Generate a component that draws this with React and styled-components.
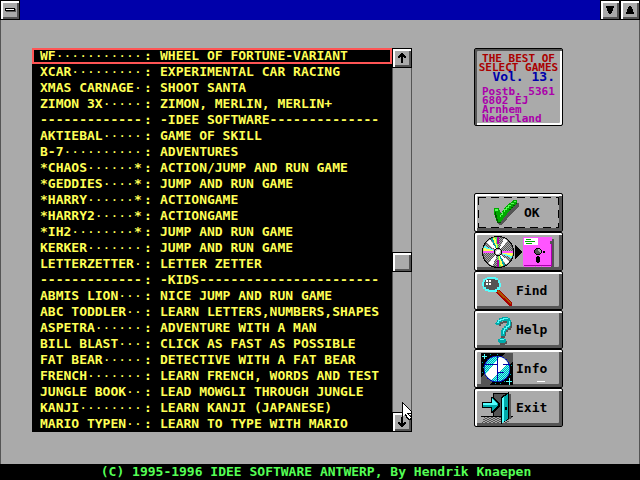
import React from "react";
import styled, { createGlobalStyle, css } from "styled-components";

const c = {
  gray: "#aaaaaa",
  dark: "#555555",
  blue: "#0000aa",
  yellow: "#ffff55",
  red: "#ff5555",
  green: "#55ff55",
};

const Global = createGlobalStyle`
  * { box-sizing: border-box; }
  body { margin: 0; background: ${c.gray}; font: bold 13px/16px "DejaVu Sans Mono", monospace; }
  button { font: inherit; color: #000; cursor: default; }
`;

const Page = styled.div`
  min-height: 100vh;
  display: flex;
  flex-direction: column;
`;

const TitleBar = styled.header`
  display: flex;
  height: 20px;
  background: ${c.blue};
`;

const Spacer = styled.div`
  flex: 1;
`;

const bevel = css`
  background: ${c.gray};
  border: 1px solid #000;
  box-shadow: inset 2px 2px 0 #fff, inset -2px -2px 0 ${c.dark};
`;

const SmallButton = styled.button`
  ${bevel}
  display: grid;
  place-items: center;
  flex: none;
  width: 20px;
  height: 20px;
  padding: 0;
`;

const Main = styled.main`
  flex: 1;
  display: flex;
  align-items: flex-start;
  gap: 62px;
  padding: 28px 76px 32px 31px;
  border: solid ${c.dark};
  border-width: 0 1px;
`;

const ListPanel = styled.section`
  flex: 1;
  display: flex;
  background: #000;
`;

const Games = styled.table`
  flex: 1;
  display: block;
  color: ${c.yellow};
  tbody { display: block; }
`;

const GameRow = styled.tr`
  display: grid;
  grid-template-columns: 104px 16px 1fr;
  height: 16px;
  padding-left: 8px;
  white-space: pre;
  outline: ${(p) => (p.$selected ? `2px solid ${c.red}` : "none")};
  outline-offset: -2px;
`;

const Cell = styled.td`
  padding: 0;
  line-height: 15px;
`;

const Leader = styled.span`
  font-weight: normal;
`;

const ScrollBar = styled.div`
  width: 20px;
  display: flex;
  flex-direction: column;
  background: ${c.gray};
`;

const Track = styled.div`
  flex: ${(p) => p.$share};
  border: solid ${c.dark};
  border-width: 0 1px;
`;

const Side = styled.aside`
  flex: none;
  width: 89px;
  align-self: stretch;
  display: flex;
  flex-direction: column;
  justify-content: space-between;
  padding-bottom: 5px;
`;

const Card = styled.div`
  height: 78px;
  padding: 5px 2px 0;
  border: 1px solid #000;
  border-radius: 2px;
  box-shadow: inset 2px 2px 0 ${c.dark}, inset -2px -2px 0 #fff;
  white-space: nowrap;
`;

const CardTitle = styled.h1`
  margin: 0;
  font: bold 11px/9px "DejaVu Sans Mono", monospace;
  color: #aa0000;
  text-align: center;
`;

const Volume = styled.p`
  margin: 0 5px 6px;
  font-size: 13px;
  line-height: 9px;
  color: ${c.blue};
  text-align: right;
`;

const Address = styled.address`
  padding-left: 5px;
  font: bold 11px/9px "DejaVu Sans Mono", monospace;
  color: #aa00aa;
`;

const Actions = styled.nav`
  display: flex;
  flex-direction: column;
`;

const Action = styled.button`
  position: relative;
  display: flex;
  align-items: center;
  gap: 3px;
  height: 39px;
  padding: 0 0 0 6px;
  background: ${c.gray};
  border: 1px solid #000;
  border-radius: 2px;
  box-shadow: inset 2px 2px 0 #fff, inset -3px -3px 0 ${c.dark};
`;

const FocusRing = styled.span`
  position: absolute;
  inset: 3px;
  background:
    repeating-linear-gradient(90deg, #000 0 8px, transparent 8px 13px) 0 0 / 100% 1px no-repeat,
    repeating-linear-gradient(90deg, #000 0 8px, transparent 8px 13px) 0 100% / 100% 1px no-repeat,
    repeating-linear-gradient(#000 0 8px, transparent 8px 13px) 0 0 / 1px 100% no-repeat,
    repeating-linear-gradient(#000 0 8px, transparent 8px 13px) 100% 0 / 1px 100% no-repeat;
`;

const Caret = styled.span`
  position: absolute;
  left: 62px;
  bottom: 5px;
  width: 8px;
  height: 1px;
  background: #fff;
`;

const Footer = styled.footer`
  height: 16px;
  padding-right: 8px;
  background: #000;
  color: ${c.green};
  line-height: 15px;
  text-align: center;
  white-space: nowrap;
`;

const Pointer = styled.svg`
  position: absolute;
  left: 402px;
  top: 402px;
`;

const Icon = ({ w = 32, h = 32, children }) => (
  <svg width={w} height={h} viewBox={`0 0 ${w} ${h}`} shapeRendering="crispEdges" aria-hidden="true">
    {children}
  </svg>
);

const DashGlyph = () => (
  <Icon w={11} h={4}>
    <path d="M1 1h10v3H1z" fill="#555" />
    <path d="M0 0h10v3H0z" />
    <path d="M1 1h8v1H1z" fill="#fff" />
  </Icon>
);
const DownGlyph = () => (
  <Icon w={8} h={8}><path d="M0 0h8v2H7v3H6v2H5v1H3V7H2V5H1V2H0z" /></Icon>
);
const UpGlyph = () => (
  <Icon w={8} h={8}><path d="M0 8h8V6H7V3H6V1H5V0H3v1H2v2H1v3H0z" /></Icon>
);
const ArrowUp = () => (
  <Icon w={8} h={10}><path d="M3 0h2v1h1v1h1v1h1v2H6V4H5v6H3V4H2v1H0V3h1V2h1V1h1z" /></Icon>
);
const ArrowDown = () => (
  <Icon w={8} h={10}><path d="M3 10h2V9h1V8h1V7h1V5H6v1H5V0H3v6H2V5H0v2h1v1h1v1h1z" /></Icon>
);

const CheckIcon = () => (
  <Icon w={40}>
    <path d="M15 14h4l2 4 5-7 9-5h3v3l-7 7-10 12h-3l-3-9z" fill="#555" />
    <path d="M13 11h5l2 6 4-7 9-7h3v3l-7 7-10 13h-3l-3-10z" fill="#0a0" />
    <path d="M14 12h3v2h-3zM20 17h1v-2h2v-3h2v-2h2V8h3V6h3V4h2v1h-2v2h-3v2h-2v2h-2v2h-2v2h-2v3h-2v2h-1z" fill="#5f5" />
    <path d="M13 15h1v5h1v3h1v3h4v-1h-3v-3h-1v-4h-1v-3zM35 6h1v1h-2v2h-2v2h-2v2h-2v-1h2v-2h2V8h2V7h1z" fill="#050" />
  </Icon>
);

const TransferIcon = () => (
  <Icon w={74}>
    <defs>
      <pattern id="dither" width="2" height="2" patternUnits="userSpaceOnUse">
        <path d="M0 0h2v2H0z" fill="#aaa" /><path d="M0 0h1v1H0zM1 1h1v1H1z" fill="#555" />
      </pattern>
      <clipPath id="disc"><circle cx="17" cy="16" r="15" /></clipPath>
    </defs>
    <circle cx="17" cy="16" r="16" fill="#000" />
    <g clipPath="url(#disc)">
      <path d="M0 0h34v32H0z" fill="url(#dither)" />
      <path d="M17 16L1 3l6-3zM17 16l15 13-5 3z" fill="#fff" />
      <path d="M17 16L8 0h3zM17 16l9 16h-3z" fill="#0aa" />
      <path d="M17 16L11 0h3zM17 16l6 16h-3z" fill="#ff5" />
      <path d="M17 16L14 0h2zM17 16l3 16h-2z" fill="#5f5" />
      <path d="M17 16L16 0h2zM17 16l1 16h-2z" fill="#a0a" />
      <path d="M17 16L24 0h7zM17 16L11 32H3z" fill="#fff" />
      <path d="M17 16L0 8v4zM17 16l17 8v-4z" fill="#5ff" />
      <path d="M17 16L0 11v4zM17 16l17 5v-4z" fill="#ff5" />
      <path d="M0 15h34v2H0z" fill="#f5f" />
    </g>
    <circle cx="17" cy="16" r="4" fill="#000" />
    <circle cx="17" cy="16" r="3" fill="#aaa" />
    <circle cx="17" cy="16" r="2" fill="#fff" />
    <path d="M34 9l7 7-7 7z" />
    <path d="M44 3h29v29H44z" fill="#555" />
    <path d="M42 1h29v4h-2v3h2v22h-1v1H43v-1h-1z" fill="#f5f" />
    <path d="M43 29h28v1H43zM70 8h1v22h-1z" fill="#a0a" />
    <path d="M43 2h14v7H43z" fill="#fff" />
    <path d="M45 3h5v1h-5zM44 5h10v1H44zM45 7h6v1h-6z" fill="#0a0" />
    <path d="M55 12h4v1h1v1h1v3h-1v1h-1v1h-4v-1h-1v-1h-1v-3h1v-1h1z" />
    <path d="M55 13h4v1h1v3h-1v1h-4v-1h-1v-3h1z" fill="#555" />
    <path d="M57 13h2v1h1v3h-1v-1h-1v-1h-1z" fill="#aaa" />
    <path d="M62 15h2v2h-2zM56 20h2v1h1v5h-1v1h-2v-1h-1v-5h1z" />
    <path d="M54 30h1v1h-1zM60 30h1v1h-1z" fill="#aaa" />
  </Icon>
);

const FindIcon = () => (
  <Icon>
    <path d="M17 14l14 13v4h-3L15 17z" fill="#a00" />
    <path d="M17 15l13 13v1L16 17z" fill="#a50" />
    <path d="M6 2h9v1h2v2h2v3h1v4h-1v3h-3v2H7v-1H4v-2H2v-3H1V7h1V4h2V3h2z" fill="#5ff" />
    <path d="M6 4h8v1h3v3h1v4h-2v2h-2v1H8v-1H5v-2H3V7h1V5h2z" fill="#555" />
    <path d="M5 5h2v2H5zM8 5h2v2H8zM5 8h2v2H5zM8 8h2v2H8z" fill="#fff" />
  </Icon>
);

const HelpIcon = () => (
  <Icon>
    <g fill="#555">
      <path d="M17 10h2V8h3V6h8v2h1v6h-1v2h-3v2h-2v4h-1v2h-4v-8h2v-2h3v-2h1v-3h-4v1h-2v2h-2z" />
      <path d="M19 26h6v1h1v3h-2v1h-5z" />
    </g>
    <g fill="#0aa">
      <path d="M15 8h1V6h2V4h3V3h6v1h2v2h1v6h-1v2h-2v2h-2v2h-1v4h-4v-6h1v-2h2v-2h2v-2h1V7h-5v1h-2v2h-1v1h-3v-1h-1z" />
      <path d="M19 24h4v1h2v3h-1v1h-6v-1h-1v-3h2z" />
    </g>
    <path d="M16 8h1V6h2V5h3V4h5v1h-4v1h-3v1h-2v2h-2zM28 7h1v5h-1v1h-2v2h-2v2h-1v3h-1v-4h1v-2h2v-2h2v-1h1zM19 25h4v1h-4z" fill="#5ff" />
  </Icon>
);

const InfoIcon = () => (
  <Icon>
    <defs>
      <pattern id="sea" width="2" height="2" patternUnits="userSpaceOnUse">
        <path d="M0 0h2v2H0z" fill="#0aa" /><path d="M0 0h1v1H0zM1 1h1v1H1z" fill="#5ff" />
      </pattern>
      <clipPath id="globe"><circle cx="16" cy="16" r="12.5" /></clipPath>
    </defs>
    <path d="M0 0h32v32H0z" />
    <path d="M24 0h8v8L8 32H0v-8z" fill="#555" />
    <path d="M3 1h1v2h2v1H4v2H3V4H1V3h2zM28 25h1v3h2v1h-2v3h-1v-3h-3v-1h3z" fill="#5ff" />
    <path d="M9 1h1v1H9zM16 1h1v1h-1zM1 9h1v1H1zM2 14h1v1H2zM1 19h1v1H1zM30 12h1v1h-1zM29 21h1v1h-1zM19 30h1v1h-1zM23 28h1v1h-1zM14 30h1v1h-1z" fill="#0aa" />
    <circle cx="16" cy="16" r="13.5" fill="#00a" />
    <g clipPath="url(#globe)">
      <path d="M0 0h32v32H0z" fill="url(#sea)" />
      <path d="M20 2h6l3 6L10 28l-6-6z" fill="#fff" />
    </g>
    <path d="M16 3h1v26h-1zM4 11h13v1H4zM22 11h7v1h-7zM16 19h7v1h-7z" fill="#00a" />
  </Icon>
);

const ExitIcon = () => (
  <Icon w={32}>
    <defs>
      <pattern id="floor" width="4" height="2" patternUnits="userSpaceOnUse">
        <path d="M0 0h2v1H0zM2 1h2v1H2z" fill="#555" />
      </pattern>
    </defs>
    <path d="M3 25h28l-5 7H1z" fill="url(#floor)" />
    <path d="M0 24h13v1H0zM28 24h4v1h-4z" />
    <path d="M12 1h16v24H12z" />
    <path d="M13 2h14v22H13z" fill="#555" />
    <path d="M28 2h2v24h-2z" fill="#555" />
    <path d="M20 5l8-5v27l-8 5z" />
    <path d="M21 6l6-4v25l-6 4z" fill="#0aa" />
    <path d="M21 6l2-1v25l-2 1z" fill="#5ff" />
    <path d="M24 15h2v3h-2z" />
    <path d="M1 10h9V5h2l7 7v2l-7 7h-2v-5H1z" />
    <path d="M2 11h9V6l6 6v1l-6 6v-4H2z" fill="#0aa" />
    <path d="M2 11h9V7l5 5v1H2z" fill="#5ff" />
  </Icon>
);

const games = [
  ["WF", "", "WHEEL OF FORTUNE-VARIANT"],
  ["XCAR", "", "EXPERIMENTAL CAR RACING"],
  ["XMAS CARNAGE", "", "SHOOT SANTA"],
  ["ZIMON 3X", "", "ZIMON, MERLIN, MERLIN+"],
  ["-------------", "", "-IDEE SOFTWARE--------------"],
  ["AKTIEBAL", "", "GAME OF SKILL"],
  ["B-7", "", "ADVENTURES"],
  ["*CHAOS", "*", "ACTION/JUMP AND RUN GAME"],
  ["*GEDDIES", "*", "JUMP AND RUN GAME"],
  ["*HARRY", "*", "ACTIONGAME"],
  ["*HARRY2", "*", "ACTIONGAME"],
  ["*IH2", "*", "JUMP AND RUN GAME"],
  ["KERKER", "", "JUMP AND RUN GAME"],
  ["LETTERZETTER", "", "LETTER ZETTER"],
  ["-------------", "", "-KIDS-----------------------"],
  ["ABMIS LION", "", "NICE JUMP AND RUN GAME"],
  ["ABC TODDLER", "", "LEARN LETTERS,NUMBERS,SHAPES"],
  ["ASPETRA", "", "ADVENTURE WITH A MAN"],
  ["BILL BLAST", "", "CLICK AS FAST AS POSSIBLE"],
  ["FAT BEAR", "", "DETECTIVE WITH A FAT BEAR"],
  ["FRENCH", "", "LEARN FRENCH, WORDS AND TEST"],
  ["JUNGLE BOOK", "", "LEAD MOWGLI THROUGH JUNGLE"],
  ["KANJI", "", "LEARN KANJI (JAPANESE)"],
  ["MARIO TYPEN", "", "LEARN TO TYPE WITH MARIO"],
];

export default function App() {
  return (
    <Page>
      <Global />
      <TitleBar>
        <SmallButton aria-label="Window menu"><DashGlyph /></SmallButton>
        <Spacer />
        <SmallButton aria-label="Minimize"><DownGlyph /></SmallButton>
        <SmallButton aria-label="Maximize"><UpGlyph /></SmallButton>
      </TitleBar>
      <Main>
        <ListPanel>
          <Games cellSpacing="0" aria-label="Games">
            <tbody>
              {games.map(([name, mark, text], i) => (
                <GameRow key={i} $selected={i === 0}>
                  <Cell>
                    {name}
                    <Leader>{"·".repeat(13 - name.length - mark.length)}</Leader>
                    {mark}
                  </Cell>
                  <Cell>:</Cell>
                  <Cell>{text}</Cell>
                </GameRow>
              ))}
            </tbody>
          </Games>
          <ScrollBar>
            <SmallButton aria-label="Scroll up"><ArrowUp /></SmallButton>
            <Track $share={184} />
            <SmallButton aria-label="Scroll position" />
            <Track $share={140} />
            <SmallButton aria-label="Scroll down"><ArrowDown /></SmallButton>
          </ScrollBar>
        </ListPanel>
        <Side>
          <Card>
            <CardTitle>THE BEST OF<br />SELECT GAMES</CardTitle>
            <Volume>Vol. 13.</Volume>
            <Address>Postb. 5361<br />6802 EJ<br />Arnhem<br />Nederland</Address>
          </Card>
          <Actions>
            <Action><CheckIcon />OK<FocusRing /></Action>
            <Action aria-label="Copy disc to floppy"><TransferIcon /></Action>
            <Action><FindIcon />Find</Action>
            <Action><HelpIcon />Help</Action>
            <Action><InfoIcon />Info<Caret /></Action>
            <Action><ExitIcon />Exit</Action>
          </Actions>
        </Side>
      </Main>
      <Footer>(C) 1995-1996 IDEE SOFTWARE ANTWERP, By Hendrik Knaepen</Footer>
      <Pointer width="11" height="18" viewBox="0 0 11 18" shapeRendering="crispEdges" aria-hidden="true">
        <path d="M0 0l10 10v2H7l3 4-2 2H6l-3-5-3 2z" />
        <path d="M1 1l8 9v1H5l4 5-2 1-3-5-3 2z" fill="#fff" />
      </Pointer>
    </Page>
  );
}
